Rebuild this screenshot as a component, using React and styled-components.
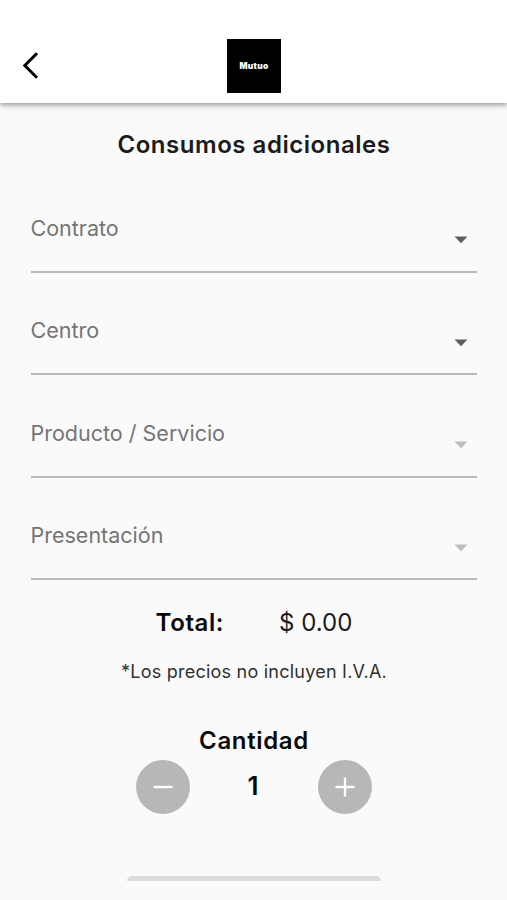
import React from "react";
import styled, { createGlobalStyle } from "styled-components";

const GlobalStyle = createGlobalStyle`
  * { box-sizing: border-box; }
  body { margin: 0; background: #fafafa; overflow: hidden; }
  button { border: 0; padding: 0; background: none; font: inherit; }
`;

const Screen = styled.div`
  height: 900px;
  display: flex;
  flex-direction: column;
  align-items: center;
  background: #fafafa;
  color: #1b1b1b;
  font-family: Inter, "Liberation Sans", sans-serif;
  white-space: nowrap;
  overflow: hidden;
`;

const AppBar = styled.header`
  width: 100%;
  height: 103px;
  flex: none;
  padding: 38px 0 0 20px;
  display: grid;
  grid-template-columns: 207px 54px 1fr;
  align-items: start;
  background: #fff;
  box-shadow: 0 2px 4px rgba(0, 0, 0, 0.3), 0 3px 8px rgba(0, 0, 0, 0.1);
`;

const BackButton = styled.button`
  width: 24px;
  height: 30px;
  margin-top: 12px;
  svg { display: block; }
`;

const Logo = styled.div`
  width: 54px;
  height: 54px;
  margin-top: 0.6px;
  display: grid;
  place-items: center;
  background: #000;
  color: #fff;
  font-size: 8.4px;
  font-weight: 900;
  line-height: 10px;
  letter-spacing: 0.3px;
`;

const Title = styled.h1`
  margin: 27px 0 0;
  padding-left: 1px;
  font-size: 24px;
  font-weight: 600;
  line-height: 30px;
  letter-spacing: 0.53px;
`;

const Fields = styled.form`
  width: 446px;
  margin-top: 10px;
`;

const Field = styled.div`
  height: 102.5px;
  padding-top: 42.9px;
  display: flex;
  justify-content: space-between;
  border-bottom: 2px solid #b9b9b9;
  color: #757575;
  font-size: 21.5px;
  line-height: 31px;
`;

const Caret = styled.svg`
  width: 14px;
  height: 8px;
  margin: 23.2px 9px 0 0;
  fill: ${(p) => (p.$disabled ? "#bdbdbd" : "#5f5f5f")};
`;

const TotalRow = styled.div`
  margin-top: 28px;
  padding-left: 1px;
  display: flex;
  gap: 55px;
  font-size: 24px;
  line-height: 30px;
`;

const Strong = styled.span`
  color: #080808;
  font-weight: 600;
  letter-spacing: 0.6px;
`;

const Note = styled.p`
  margin: 22px 0 0;
  padding-left: 1px;
  color: #303030;
  font-size: 18px;
  line-height: 24px;
  letter-spacing: 0.23px;
`;

const QuantityTitle = styled.h2`
  margin: 42px 0 0;
  padding-left: 1px;
  color: #080808;
  font-size: 24px;
  font-weight: 600;
  line-height: 30px;
  letter-spacing: 0.65px;
`;

const Stepper = styled.div`
  width: 236px;
  margin-top: 4px;
  display: flex;
  align-items: center;
  justify-content: space-between;
`;

const RoundButton = styled.button`
  width: 54px;
  height: 54px;
  border-radius: 50%;
  display: grid;
  place-items: center;
  background: #b7b7b7;
`;

const Quantity = styled.span`
  padding: 0 1px 2px 0;
  color: #080808;
  font-size: 26px;
  font-weight: 600;
  line-height: 30px;
`;

const SheetEdge = styled.div`
  width: 254px;
  height: 5px;
  margin-top: 62px;
  border-radius: 6px 6px 0 0;
  background: #dcdcdc;
`;

const FIELDS = [
  { label: "Contrato" },
  { label: "Centro" },
  { label: "Producto / Servicio", disabled: true },
  { label: "Presentación", disabled: true },
];

function StepIcon({ plus }) {
  return (
    <svg width="20" height="20" viewBox="0 0 20 20" stroke="#fff" strokeWidth="2.4">
      <path d="M0.5 10H19.5" />
      {plus && <path d="M10 0.5V19.5" />}
    </svg>
  );
}

export default function App() {
  return (
    <Screen>
      <GlobalStyle />
      <AppBar>
        <BackButton type="button" aria-label="Volver">
          <svg width="24" height="30" viewBox="0 0 24 30" fill="none" stroke="#000" strokeWidth="3">
            <path d="M17 3.3L4.8 15.5L17 27.7" />
          </svg>
        </BackButton>
        <Logo>Mutuo</Logo>
      </AppBar>
      <Title>Consumos adicionales</Title>
      <Fields>
        {FIELDS.map(({ label, disabled }) => (
          <Field key={label}>
            <span>{label}</span>
            <Caret viewBox="0 0 14 8" $disabled={disabled}>
              <path d="M0.5 0.5H13.5L7 7.2Z" />
            </Caret>
          </Field>
        ))}
      </Fields>
      <TotalRow>
        <Strong>Total:</Strong>
        <span>$ 0.00</span>
      </TotalRow>
      <Note>*Los precios no incluyen I.V.A.</Note>
      <QuantityTitle>Cantidad</QuantityTitle>
      <Stepper>
        <RoundButton type="button" aria-label="Disminuir"><StepIcon /></RoundButton>
        <Quantity>1</Quantity>
        <RoundButton type="button" aria-label="Aumentar"><StepIcon plus /></RoundButton>
      </Stepper>
      <SheetEdge />
    </Screen>
  );
}
